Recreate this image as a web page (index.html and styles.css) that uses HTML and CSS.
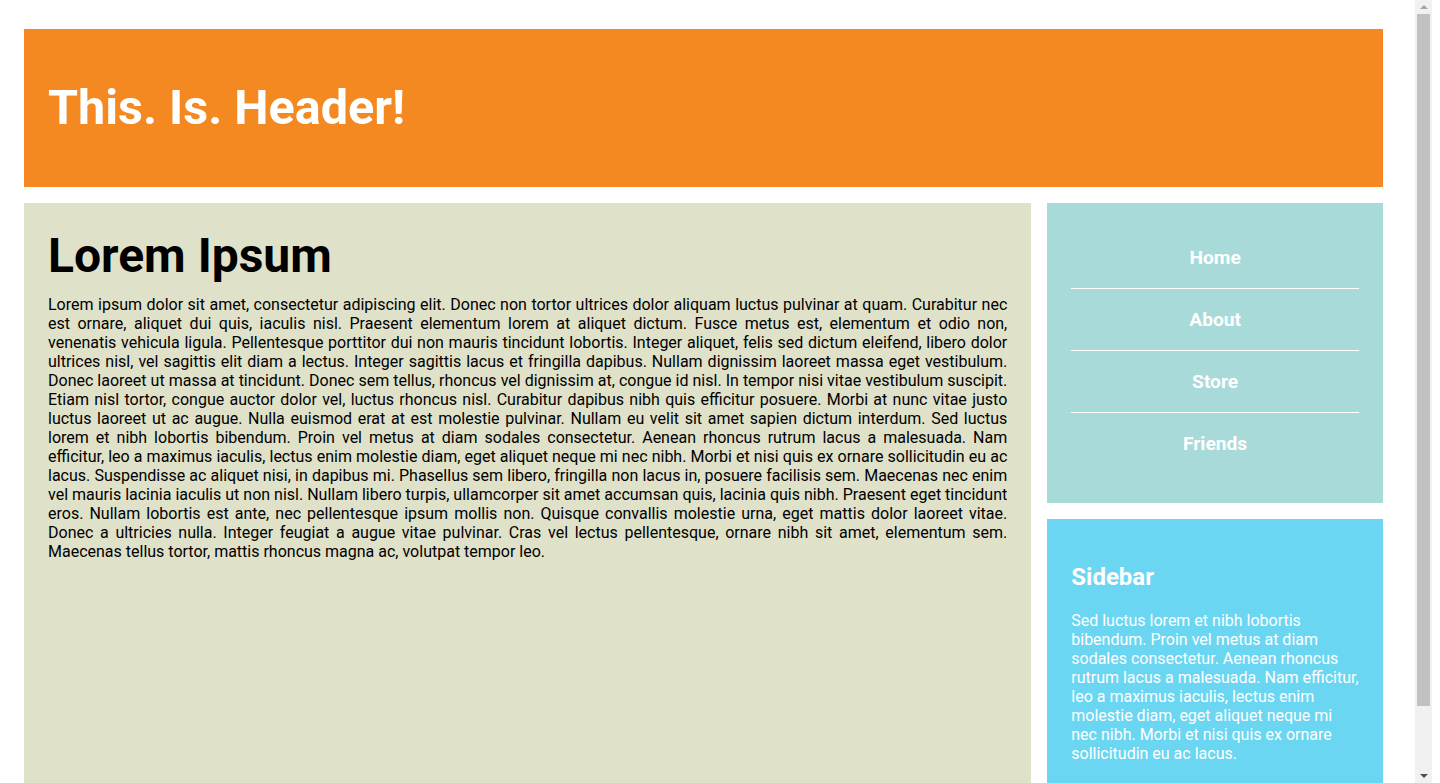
FILE: index.html
```html
<!DOCTYPE html>
<html lang="en">
<head>
<meta charset="utf-8">
<title>This. Is. Header!</title>
<link rel="stylesheet" href="styles.css">
</head>
<body>
<div class="page">
  <header class="site-header">
    <h1 class="site-title">This. Is. Header!</h1>
  </header>
  <main class="content">
    <h1 class="content-title">Lorem Ipsum</h1>
    <p class="content-text">Lorem ipsum dolor sit amet, consectetur adipiscing elit. Donec non tortor ultrices dolor aliquam luctus pulvinar at quam. Curabitur nec est ornare, aliquet dui quis, iaculis nisl. Praesent elementum lorem at aliquet dictum. Fusce metus est, elementum et odio non, venenatis vehicula ligula. Pellentesque porttitor dui non mauris tincidunt lobortis. Integer aliquet, felis sed dictum eleifend, libero dolor ultrices nisl, vel sagittis elit diam a lectus. Integer sagittis lacus et fringilla dapibus. Nullam dignissim laoreet massa eget vestibulum. Donec laoreet ut massa at tincidunt. Donec sem tellus, rhoncus vel dignissim at, congue id nisl. In tempor nisi vitae vestibulum suscipit. Etiam nisl tortor, congue auctor dolor vel, luctus rhoncus nisl. Curabitur dapibus nibh quis efficitur posuere. Morbi at nunc vitae justo luctus laoreet ut ac augue. Nulla euismod erat at est molestie pulvinar. Nullam eu velit sit amet sapien dictum interdum. Sed luctus lorem et nibh lobortis bibendum. Proin vel metus at diam sodales consectetur. Aenean rhoncus rutrum lacus a malesuada. Nam efficitur, leo a maximus iaculis, lectus enim molestie diam, eget aliquet neque mi nec nibh. Morbi et nisi quis ex ornare sollicitudin eu ac lacus. Suspendisse ac aliquet nisi, in dapibus mi. Phasellus sem libero, fringilla non lacus in, posuere facilisis sem. Maecenas nec enim vel mauris lacinia iaculis ut non nisl. Nullam libero turpis, ullamcorper sit amet accumsan quis, lacinia quis nibh. Praesent eget tincidunt eros. Nullam lobortis est ante, nec pellentesque ipsum mollis non. Quisque convallis molestie urna, eget mattis dolor laoreet vitae. Donec a ultricies nulla. Integer feugiat a augue vitae pulvinar. Cras vel lectus pellentesque, ornare nibh sit amet, elementum sem. Maecenas tellus tortor, mattis rhoncus magna ac, volutpat tempor leo.</p>
  </main>
  <nav class="nav">
    <ul class="nav-list">
      <li class="nav-item"><a class="nav-link" href="#">Home</a></li>
      <li class="nav-item"><a class="nav-link" href="#">About</a></li>
      <li class="nav-item"><a class="nav-link" href="#">Store</a></li>
      <li class="nav-item"><a class="nav-link" href="#">Friends</a></li>
    </ul>
  </nav>
  <aside class="sidebar">
    <h2 class="sidebar-title">Sidebar</h2>
    <p class="sidebar-text">Sed luctus lorem et nibh lobortis bibendum. Proin vel metus at diam sodales consectetur. Aenean rhoncus rutrum lacus a malesuada. Nam efficitur, leo a maximus iaculis, lectus enim molestie diam, eget aliquet neque mi nec nibh. Morbi et nisi quis ex ornare sollicitudin eu ac lacus.</p>
  </aside>
</div>
<div class="scrollbar" aria-hidden="true">
  <span class="scroll-arrow scroll-up"></span>
  <span class="scroll-thumb"></span>
  <span class="scroll-arrow scroll-down"></span>
</div>
</body>
</html>
```

FILE: styles.css
```css
html, body {
  margin: 0;
  padding: 0;
  background: #ffffff;
}

body {
  font-family: Roboto, "Liberation Sans", Arial, sans-serif;
  font-size: 16px;
  color: #000000;
}

.page {
  display: grid;
  grid-template-columns: 3fr 1fr;
  grid-template-rows: auto auto 1fr;
  gap: 16px;
  padding: 29px 57px 50px 24px;
}

.site-header {
  grid-column: 1 / 3;
  background: #f38920;
  padding: 50px 24px 51px;
}

.site-title {
  margin: 0;
  font-size: 48.5px;
  font-weight: 700;
  color: #ffffff;
}

.content {
  grid-column: 1;
  grid-row: 2 / 4;
  background: #dfe1c9;
  padding: 24px;
}

.content-title {
  margin: 0 0 11px;
  font-size: 48px;
  font-weight: 700;
}

.content-text {
  margin: 0;
  text-align: justify;
}

.nav {
  grid-column: 2;
  grid-row: 2;
  background: #a8dada;
  padding: 24px 24px 29px;
}

.nav-list {
  list-style: none;
  margin: 0;
  padding: 0;
}

.nav-item {
  text-align: center;
  padding: 19px 0;
  border-bottom: 1px solid #ffffff;
}

.nav-item:last-child {
  border-bottom: none;
}

.nav-link {
  color: #ffffff;
  font-weight: 700;
  font-size: 19.2px;
  text-decoration: none;
}

.sidebar {
  grid-column: 2;
  grid-row: 3;
  align-self: start;
  background: #6bd6f1;
  padding: 24px;
  color: #ffffff;
}

.sidebar-title {
  font-size: 24px;
  font-weight: 700;
  margin: 20px 0;
}

.sidebar-text {
  margin: 20px 0 16px;
}

/* imitation of the browser's vertical scrollbar seen in the reference */
.scrollbar {
  position: fixed;
  top: 0;
  bottom: 0;
  left: 1415px;
  width: 17px;
  background: #f1f1f1;
  display: flex;
  flex-direction: column;
  align-items: center;
}

.scroll-arrow {
  flex: 0 0 14px;
  display: flex;
  align-items: center;
  justify-content: center;
  width: 17px;
}

.scroll-arrow::before {
  content: "";
  border-left: 4px solid transparent;
  border-right: 4px solid transparent;
}

.scroll-up::before {
  border-bottom: 4px solid #a3a3a3;
}

.scroll-down::before {
  border-top: 4px solid #505050;
}

.scroll-thumb {
  width: 13px;
  height: 692px;
  background: #c1c1c1;
}

.scroll-down {
  margin-top: auto;
}
```
